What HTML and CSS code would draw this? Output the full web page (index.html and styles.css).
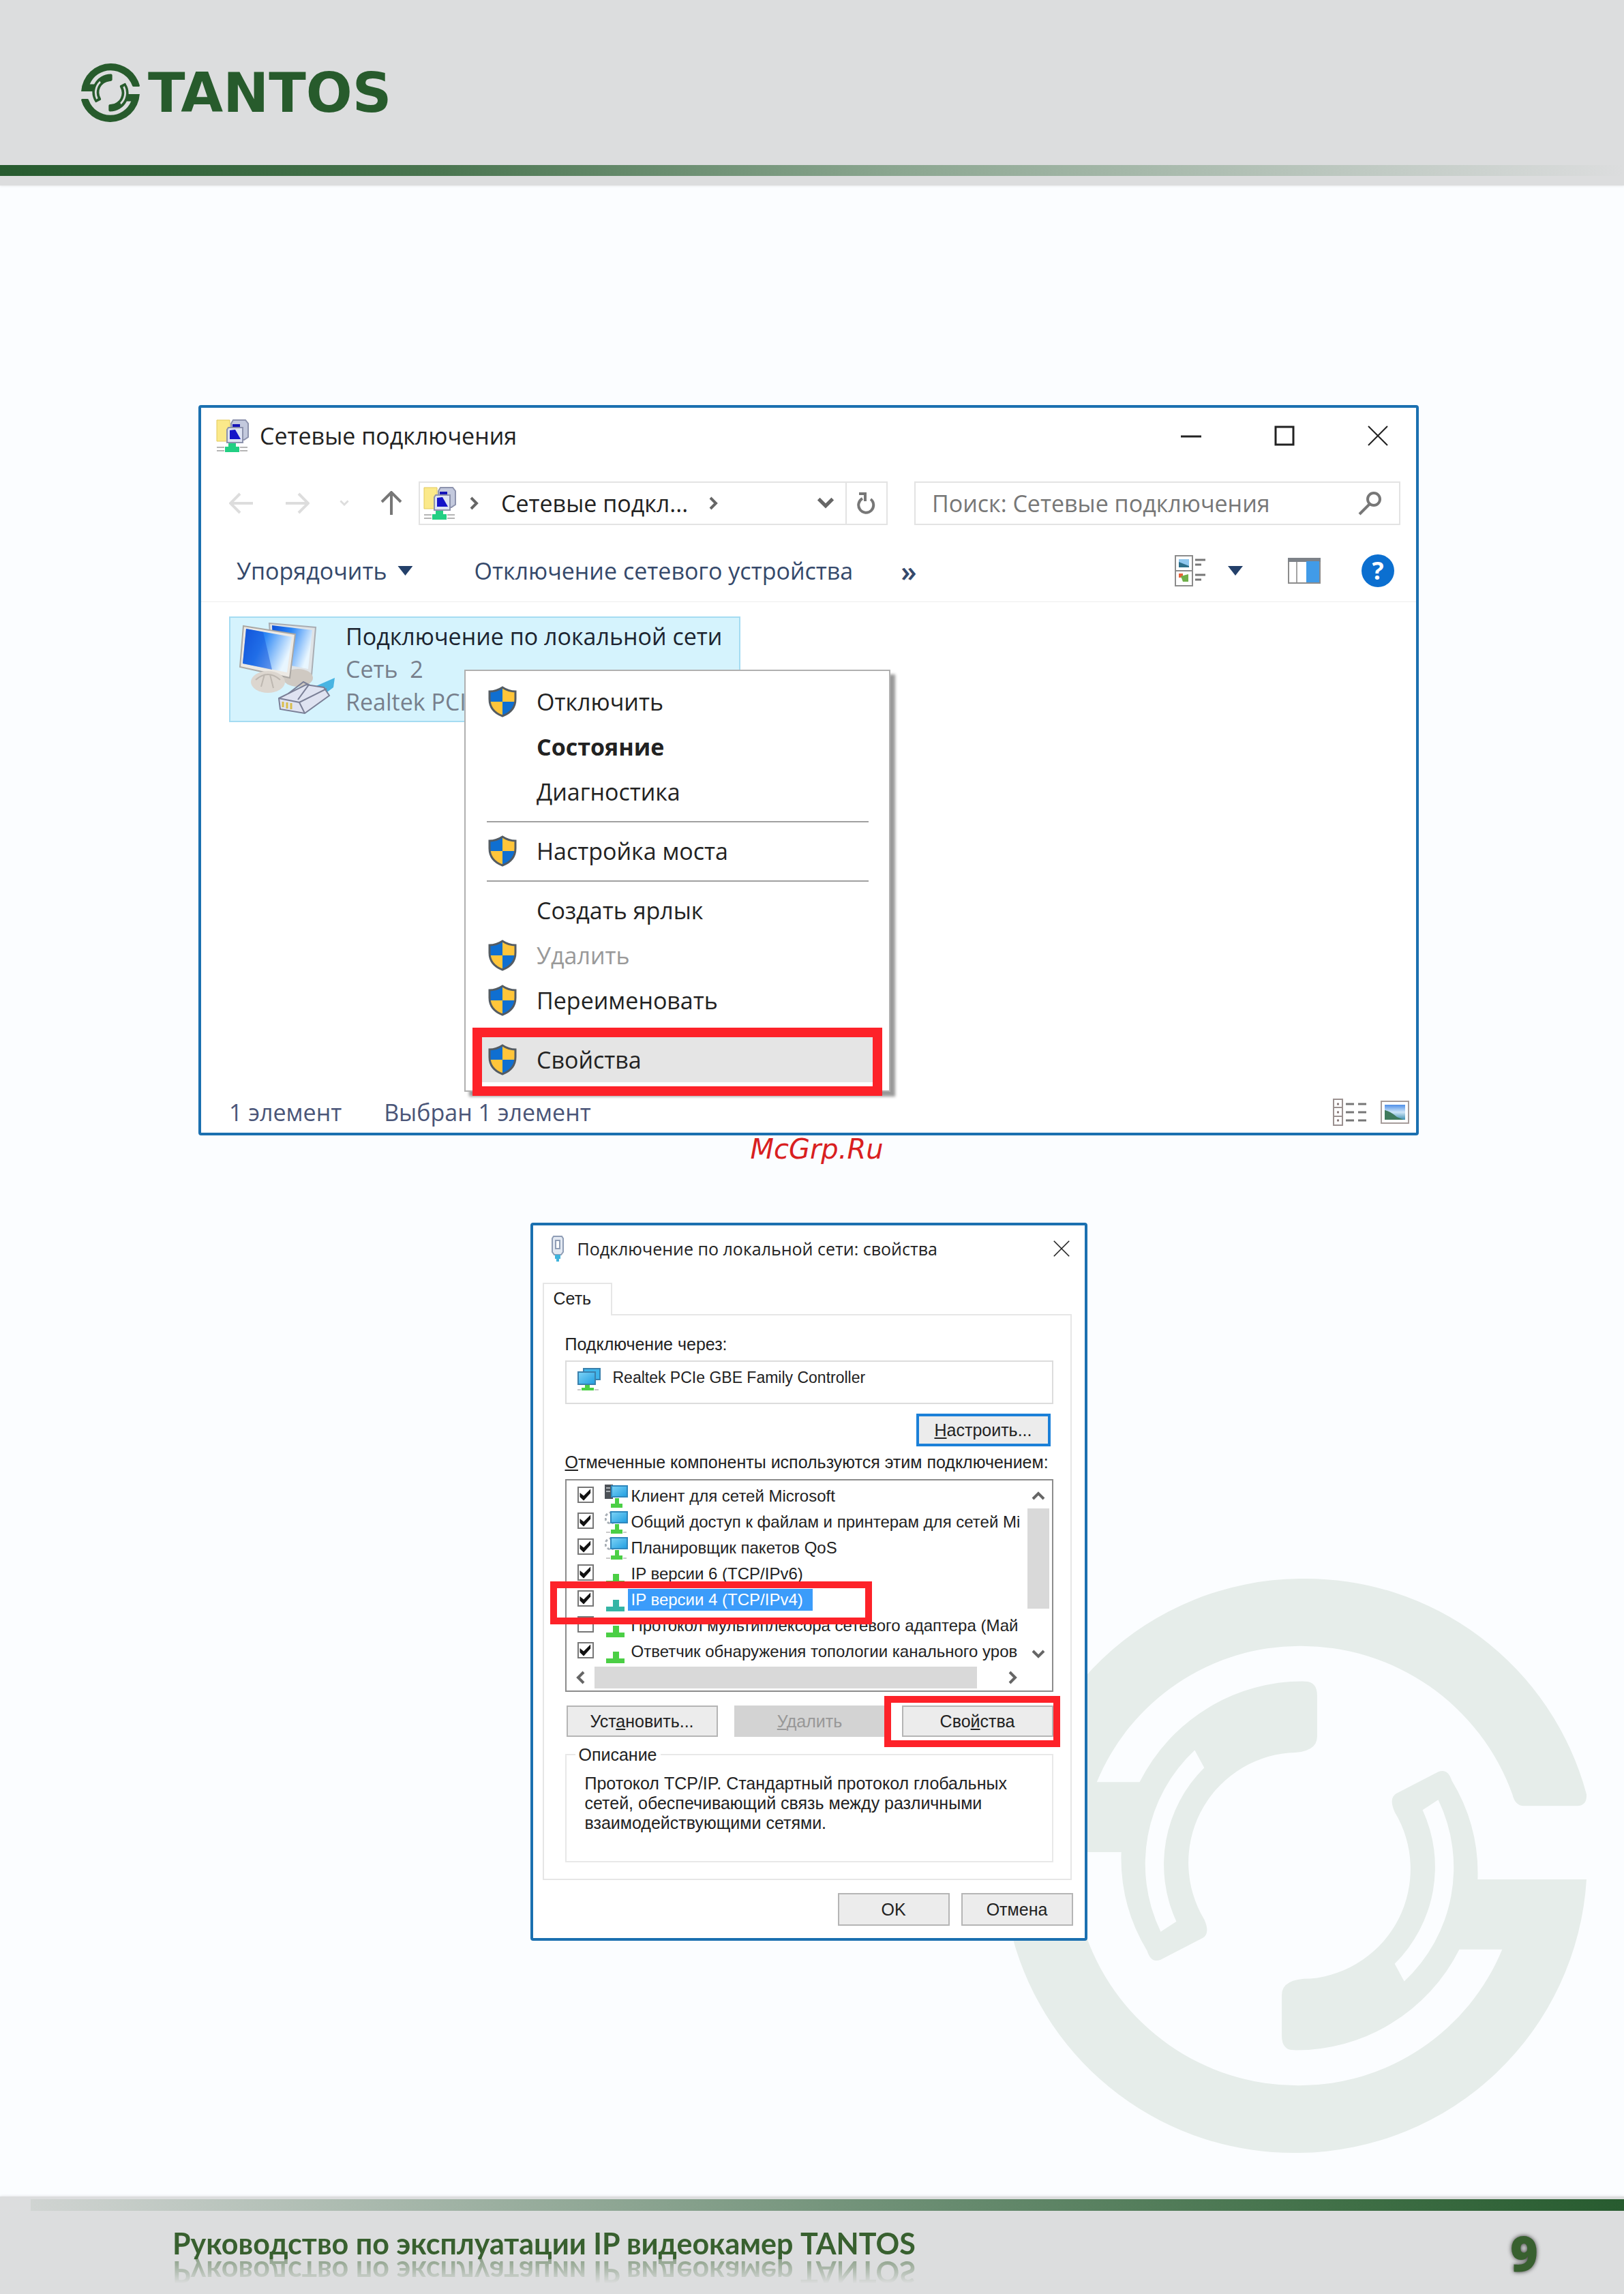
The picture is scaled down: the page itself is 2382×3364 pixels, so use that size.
FILE: index.html
```
<!DOCTYPE html>
<html lang="ru">
<head>
    <meta charset="utf-8">
    <title>Руководство по эксплуатации IP видеокамер TANTOS</title>
    <link rel="stylesheet" href="styles.css">
</head>
<body>
    <svg class="sprite" aria-hidden="true">
        <defs>
            <linearGradient id="screen" x1="0" y1="0" x2="1" y2="0.4">
                <stop offset="0" stop-color="#0b4fd8"/>
                <stop offset="0.45" stop-color="#2b86f5"/>
                <stop offset="1" stop-color="#e8f6ff"/>
            </linearGradient>
            <linearGradient id="cyan" x1="0" y1="0" x2="1" y2="1">
                <stop offset="0" stop-color="#7fd4f7"/>
                <stop offset="1" stop-color="#1f9de0"/>
            </linearGradient>
            <linearGradient id="photo" x1="0" y1="0" x2="0" y2="1">
                <stop offset="0" stop-color="#4f8fe8"/>
                <stop offset="0.5" stop-color="#cfe6f7"/>
                <stop offset="1" stop-color="#3f8fb0"/>
            </linearGradient>
        </defs>
        <symbol id="emblem" viewBox="-423 -423 846 846">
            <g id="emblem-half">
                <path fill-rule="evenodd" d="M408 -88Q423 -88 422 -105A428 428 0 0 0 0 -422A428 428 0 0 0 -422 -20L-262 -20A263 263 0 0 0 -224 125Q-218 144 -204 138L-142 106Q-131 99 -140 79A162 162 0 0 1 -16 -166Q26 -166 26 -190L26 -250Q26 -271 8 -271A268 268 0 0 0 -235 -123L-298 -123A323 323 0 0 1 0 -323A330 330 0 0 1 313 -105Q317 -88 330 -88ZM-154 -170L-140 -144A200 200 0 0 0 -181 82L-204 97A229 229 0 0 1 -154 -170Z"/>
            </g>
            <use href="#emblem-half" transform="rotate(180)"/>
        </symbol>
        <symbol id="shield" viewBox="0 0 44 46">
            <path fill="#0f6fd1" d="M22 2Q13 8 3 8V23H22Z"/>
            <path fill="#ffc53a" d="M22 2Q31 8 41 8V23H22Z"/>
            <path fill="#ffc53a" d="M3 23Q6 38 22 44V23Z"/>
            <path fill="#0f6fd1" d="M41 23Q38 38 22 44V23Z"/>
            <path fill="none" stroke="#545c63" stroke-width="3" d="M22 2Q13 8 3 8V19Q3 37 22 44Q41 37 41 19V8Q31 8 22 2Z"/>
        </symbol>
        <symbol id="net-folder" viewBox="0 0 48 48">
            <path fill="#fbe98a" stroke="#e2c95a" d="M1 1H20V32H1Z"/>
            <path fill="#c3c9dd" stroke="#8d93ad" stroke-width="2" d="M25 1H43L47 6V26L41 30H22V6Z"/>
            <path fill="#1514b8" d="M24 7H35V16H24Z"/>
            <path fill="#dfe4f3" stroke="#8d93ad" stroke-width="2" d="M18 12H39V34H16V15Z"/>
            <path fill="#1514c8" d="M20 16L28 15L36 29H20Z"/>
            <path fill="#22cf83" d="M18 35H29V40H34V48H13V40H18Z"/>
            <path stroke="#b5b5b5" stroke-width="2" d="M1 41H12M35 41H46M1 46H12M35 46H46"/>
        </symbol>
        <symbol id="lan" viewBox="0 0 142 136">
            <path fill="#dfe3e6" stroke="#a9adb3" stroke-width="2" d="M44 2L112 8L106 78L48 66Z"/>
            <path fill="url(#screen)" d="M48 5L107 12L101 69L50 59Z"/>
            <ellipse cx="86" cy="82" rx="22" ry="13" fill="#cfc9c2"/>
            <path fill="#ece9e4" stroke="#aaa7a3" stroke-width="2" d="M6 6L82 18L74 82L1 66Z"/>
            <path fill="url(#screen)" d="M10 10L77 22L70 74L5 61Z"/>
            <path fill="#1656da" opacity=".5" d="M10 10L35 15L48 70L5 61Z"/>
            <ellipse cx="42" cy="88" rx="25" ry="16" fill="#dcd6cf"/>
            <path stroke="#bdb7b0" stroke-width="2" fill="none" d="M24 85Q42 69 60 85M32 95L37 77M50 97L45 77"/>
            <path fill="#48b4e2" d="M108 96L140 82L138 96L122 108Z"/>
            <path fill="#dfe3f1" stroke="#7a7f96" stroke-width="2" d="M58 112L98 92L124 96L132 108L96 134L60 128Z"/>
            <path fill="none" stroke="#7a7f96" stroke-width="2" d="M58 112L88 118L96 134M88 118L128 98M72 105L94 88L102 92L86 114"/>
            <path stroke="#d9bd4a" stroke-width="3" d="M64 117V125M70 118V127M76 119V128"/>
        </symbol>
        <symbol id="adapter" viewBox="0 0 34 34">
            <path fill="#3fb4ea" stroke="#3a80ac" stroke-width="2" d="M9 1H33V17H9Z"/>
            <path fill="url(#cyan)" stroke="#3a80ac" stroke-width="2" d="M1 6H26V24H1Z"/>
            <path fill="#4bcf45" d="M11 25H18V29H24V33H6V29H11Z"/>
            <path stroke="#c9c9c9" stroke-width="2" d="M0 32H5M25 32H31"/>
        </symbol>
        <symbol id="client" viewBox="0 0 34 34">
            <path fill="#4c5157" d="M0 0H12V21H0Z"/>
            <path stroke="#aab0b5" stroke-width="2" d="M2 5H8M2 10H8"/>
            <path fill="url(#cyan)" stroke="#2f87bd" stroke-width="2" d="M10 2H33V18H10Z"/>
            <path fill="#4bcf45" d="M15 20H21V28H26V34H9V28H15Z"/>
        </symbol>
        <symbol id="service" viewBox="0 0 34 34">
            <circle cx="9" cy="11" r="8" fill="none" stroke="#a6adb4" stroke-width="3" stroke-dasharray="4 3"/>
            <path fill="url(#cyan)" stroke="#2f87bd" stroke-width="2" d="M9 2H33V18H9Z"/>
            <path fill="#4bcf45" d="M15 20H21V28H26V34H9V28H15Z"/>
            <path stroke="#c9c9c9" stroke-width="2" d="M2 32H8M27 32H32"/>
        </symbol>
        <symbol id="protocol" viewBox="0 0 34 34">
            <path fill="currentColor" d="M12 17H21V27H29V34H2V27H12Z"/>
        </symbol>
        <symbol id="cross" viewBox="0 0 30 30">
            <path fill="none" stroke="#222" stroke-width="2" d="M1 1L29 29M29 1L1 29"/>
        </symbol>
        <symbol id="chevron" viewBox="0 0 14 20">
            <path fill="none" stroke="currentColor" stroke-width="4" d="M2 2L10 10L2 18"/>
        </symbol>
        <symbol id="arrow" viewBox="0 0 36 32">
            <path fill="none" stroke="currentColor" stroke-width="4" d="M16 2L2 16L16 30M2 16H35"/>
        </symbol>
    </svg>

    <header class="page-header">
        <a class="logo" href="#">
            <svg class="logo-emblem"><use href="#emblem"/></svg>
            <span>TANTOS</span>
        </a>
        <div class="header-line"></div>
    </header>

    <main>
        <svg class="watermark" aria-hidden="true"><use href="#emblem"/></svg>

        <section class="window explorer">
            <div class="title-bar">
                <svg class="icon-48"><use href="#net-folder"/></svg>
                <h2>Сетевые подключения</h2>
                <div class="window-controls">
                    <button aria-label="Свернуть"><svg viewBox="0 0 30 30"><path stroke="#222" stroke-width="3" d="M0 16H30"/></svg></button>
                    <button aria-label="Развернуть"><svg viewBox="0 0 30 30"><path fill="none" stroke="#222" stroke-width="3" d="M2 2H28V28H2Z"/></svg></button>
                    <button aria-label="Закрыть"><svg><use href="#cross"/></svg></button>
                </div>
            </div>

            <div class="nav-row">
                <div class="nav-arrows">
                    <button aria-label="Назад"><svg class="arrow faded"><use href="#arrow"/></svg></button>
                    <button aria-label="Вперед"><svg class="arrow faded forward"><use href="#arrow"/></svg></button>
                    <button aria-label="Последние"><svg class="chevron small faded down"><use href="#chevron"/></svg></button>
                    <button aria-label="Вверх"><svg class="arrow up"><use href="#arrow"/></svg></button>
                </div>
                <div class="address">
                    <svg class="icon-48"><use href="#net-folder"/></svg>
                    <svg class="chevron"><use href="#chevron"/></svg>
                    <span class="address-text">Сетевые подкл...</span>
                    <svg class="chevron"><use href="#chevron"/></svg>
                    <button class="address-drop" aria-label="Список"><svg class="chevron big down"><use href="#chevron"/></svg></button>
                    <button class="address-refresh" aria-label="Обновить">
                        <svg viewBox="0 0 28 34"><path fill="none" stroke="#777" stroke-width="4" d="M21 11A11 11 0 1 1 9 10M4 3H13V14"/></svg>
                    </button>
                </div>
                <div class="search">
                    <input type="text" aria-label="Поиск" placeholder="Поиск: Сетевые подключения">
                    <svg viewBox="0 0 36 36"><circle cx="23" cy="12" r="9" fill="none" stroke="#777" stroke-width="4"/><path stroke="#777" stroke-width="4" d="M17 19L2 34"/></svg>
                </div>
            </div>

            <div class="toolbar">
                <button class="organize">Упорядочить <i class="triangle"></i></button>
                <button>Отключение сетевого устройства</button>
                <button class="more">»</button>
                <div class="toolbar-right">
                    <button class="views" aria-label="Вид">
                        <svg viewBox="0 0 46 46">
                            <path fill="#fff" stroke="#8c8c8c" stroke-width="2" d="M1 1H26V45H1ZM1 23H26"/>
                            <path fill="#8fc7ee" d="M6 6H21V18H6Z"/><path fill="#2c6f8a" d="M6 18V10L21 16V18Z"/>
                            <path fill="#e8623a" d="M6 27H12V33H6Z"/><path fill="#6fb04a" d="M9 31L20 28V39H12Z"/>
                            <path stroke="#777" stroke-width="3" d="M30 7H45M30 14H39M30 29H45M30 36H39"/>
                        </svg>
                        <i class="triangle"></i>
                    </button>
                    <button class="pane" aria-label="Область просмотра">
                        <svg viewBox="0 0 48 38">
                            <path fill="#fff" stroke="#8c8c8c" stroke-width="2" d="M1 1H47V37H1Z"/>
                            <path fill="#7d8288" d="M0 0H48V6H0Z"/>
                            <path stroke="#a5a5a5" stroke-width="2" d="M13 6V36"/>
                            <path fill="#419be8" d="M27 5H46V36H27Z"/>
                        </svg>
                    </button>
                    <button class="help">?</button>
                </div>
            </div>

            <div class="content">
                <div class="connection">
                    <svg class="connection-icon"><use href="#lan"/></svg>
                    <div>
                        <p class="name">Подключение по локальной сети</p>
                        <p>Сеть&nbsp; 2</p>
                        <p>Realtek PCIe GBE</p>
                    </div>
                </div>

                <ul class="context-menu">
                    <li><button><svg><use href="#shield"/></svg>Отключить</button></li>
                    <li><button class="bold">Состояние</button></li>
                    <li><button>Диагностика</button></li>
                    <li class="separator"></li>
                    <li><button><svg><use href="#shield"/></svg>Настройка моста</button></li>
                    <li class="separator"></li>
                    <li><button>Создать ярлык</button></li>
                    <li><button disabled><svg><use href="#shield"/></svg>Удалить</button></li>
                    <li><button><svg><use href="#shield"/></svg>Переименовать</button></li>
                    <li class="separator"></li>
                    <li class="marked"><button><svg><use href="#shield"/></svg>Свойства</button></li>
                </ul>
            </div>

            <div class="status-bar">
                <span>1 элемент</span>
                <span>Выбран 1 элемент</span>
                <div class="status-views">
                    <svg viewBox="0 0 50 40">
                        <path fill="none" stroke="#9b9190" stroke-width="2" d="M1 1H14V39H1ZM1 13H14M1 26H14"/>
                        <path stroke="#8a7a7a" stroke-width="3" d="M6 8H9M6 20H9M6 32H9"/>
                        <path stroke="#777" stroke-width="3" d="M19 8H31M37 8H49M19 20H31M37 20H49M19 32H31M37 32H49"/>
                    </svg>
                    <svg viewBox="0 0 42 34">
                        <path fill="#fff" stroke="#a69c9a" stroke-width="2" d="M1 1H41V33H1Z"/>
                        <path fill="url(#photo)" d="M6 6H36V28H6Z"/>
                        <path fill="#3f7a5c" d="M6 28V14Q14 15 24 24L34 28Z"/>
                    </svg>
                </div>
            </div>
        </section>

        <p class="site-mark">McGrp.Ru</p>

        <section class="window dialog">
            <div class="title-bar">
                <svg class="plug" viewBox="0 0 18 38"><path fill="#e3e9f2" stroke="#8f9db5" stroke-width="2" d="M3 1H15L17 4V24L14 28H4L1 24V4Z"/><path fill="#fff" stroke="#8f9db5" stroke-width="2" d="M6 7H12V19H6Z"/><path fill="#3fb3dc" d="M5 28H13V34H11V38H7V34H5Z"/></svg>
                <h2>Подключение по локальной сети: свойства</h2>
                <button class="close" aria-label="Закрыть"><svg><use href="#cross"/></svg></button>
            </div>

            <button class="tab">Сеть</button>
            <div class="panel">
                <p>Подключение через:</p>
                <div class="adapter">
                    <svg><use href="#adapter"/></svg>
                    <span>Realtek PCIe GBE Family Controller</span>
                </div>
                <button class="btn configure"><u>Н</u>астроить...</button>
                <p class="list-label"><u>О</u>тмеченные компоненты используются этим подключением:</p>

                <div class="list">
                    <ul class="rows">
                        <li><input type="checkbox" id="c1" checked><svg><use href="#client"/></svg><label for="c1">Клиент для сетей Microsoft</label></li>
                        <li><input type="checkbox" id="c2" checked><svg><use href="#service"/></svg><label for="c2">Общий доступ к файлам и принтерам для сетей Mi</label></li>
                        <li><input type="checkbox" id="c3" checked><svg><use href="#service"/></svg><label for="c3">Планировщик пакетов QoS</label></li>
                        <li><input type="checkbox" id="c4" checked><svg><use href="#protocol"/></svg><label for="c4">IP версии 6 (TCP/IPv6)</label></li>
                        <li class="selected"><input type="checkbox" id="c5" checked><svg><use href="#protocol"/></svg><label for="c5">IP версии 4 (TCP/IPv4)</label></li>
                        <li><input type="checkbox" id="c6"><svg><use href="#protocol"/></svg><label for="c6">Протокол мультиплексора сетевого адаптера (Май</label></li>
                        <li><input type="checkbox" id="c7" checked><svg><use href="#protocol"/></svg><label for="c7">Ответчик обнаружения топологии канального уров</label></li>
                    </ul>
                    <div class="v-scroll">
                        <svg class="chevron top"><use href="#chevron"/></svg>
                        <div class="thumb"></div>
                        <svg class="chevron down"><use href="#chevron"/></svg>
                    </div>
                    <div class="h-scroll">
                        <svg class="chevron left"><use href="#chevron"/></svg>
                        <div class="thumb"></div>
                        <svg class="chevron"><use href="#chevron"/></svg>
                    </div>
                </div>

                <div class="actions">
                    <button class="btn">Уст<u>а</u>новить...</button>
                    <button class="btn" disabled><u>У</u>далить</button>
                    <div class="marked"><button class="btn">Сво<u>й</u>ства</button></div>
                </div>

                <fieldset>
                    <legend>Описание</legend>
                    <p>Протокол TCP/IP. Стандартный протокол глобальных сетей, обеспечивающий связь между различными взаимодействующими сетями.</p>
                </fieldset>
            </div>
            <div class="dialog-buttons">
                <button class="btn">OK</button>
                <button class="btn">Отмена</button>
            </div>
        </section>
    </main>

    <footer class="page-footer">
        <div class="footer-line"></div>
        <div class="footer-row">
            <span class="footer-title">Руководство по эксплуатации IP видеокамер TANTOS</span>
            <span class="page-number">9</span>
        </div>
    </footer>
</body>
</html>
```
FILE: styles.css
```
*, *::before, *::after {
    box-sizing: border-box;
}

body {
    margin: 0;
    min-height: 100vh;
    display: flex;
    flex-direction: column;
    position: relative;
    background-color: #fbfdff;
    font-family: "Open Sans", "Noto Sans", sans-serif;
    color: #222;
}

h2, p, ul {
    margin: 0;
    padding: 0;
    font-weight: normal;
    list-style: none;
}

svg {
    display: block;
    flex: none;
}

button {
    margin: 0;
    padding: 0;
    border: none;
    background: none;
    font: inherit;
    color: inherit;
}

.sprite {
    position: absolute;
    width: 0;
    height: 0;
}

/* page header */
.page-header {
    background-color: #dcddde;
    padding: 93px 0 14px;
    box-shadow: 0 0 4px #dcddde;
}

.logo {
    display: flex;
    align-items: center;
    gap: 12px;
    margin-left: 119px;
    height: 86px;
    color: #275b2c;
    font-family: "DejaVu Sans", sans-serif;
    font-size: 80px;
    font-weight: bold;
    text-decoration: none;
}

.logo-emblem {
    width: 86px;
    height: 86px;
    fill: #275b2c;
}

.header-line {
    height: 16px;
    margin-top: 63px;
    background: linear-gradient(to right, #275b2f, #4a7550 27%, #8ba690 55%, #dcddde);
}

/* main area */
main {
    flex: 1;
    padding: 322px 301px 0 291px;
}

.watermark {
    position: absolute;
    right: 54px;
    bottom: 206px;
    width: 844px;
    height: 844px;
    fill: #e6edea;
}

.window {
    position: relative;
    border: 4px solid #1b70b0;
    border-radius: 4px;
    background-color: #fff;
}

.title-bar {
    display: flex;
    align-items: center;
}

.icon-48 {
    width: 48px;
    height: 48px;
}

/* explorer window */
.explorer {
    font-size: 34px;
}

.explorer .title-bar {
    height: 82px;
    padding: 0 41px 0 22px;
}

.explorer h2 {
    flex: 1;
    margin-left: 16px;
    font-size: 34px;
}

.window-controls {
    display: flex;
    gap: 107px;
}

.window-controls svg {
    width: 30px;
    height: 30px;
}

.nav-row {
    display: flex;
    margin: 26px 23px 0 41px;
    height: 64px;
}

.nav-arrows {
    width: 278px;
    display: flex;
    align-items: center;
    justify-content: space-between;
    padding-right: 22px;
}

.arrow {
    width: 36px;
    height: 32px;
    color: #777;
}

.faded {
    color: #ddd;
}

.forward {
    transform: rotate(180deg);
}

.up {
    transform: rotate(90deg);
}

.chevron {
    width: 14px;
    height: 20px;
    color: #666;
}

.chevron.big {
    width: 18px;
    height: 26px;
}

.chevron.small {
    width: 10px;
    height: 14px;
}

.chevron.faded {
    color: #ddd;
}

.down {
    transform: rotate(90deg);
}

.left {
    transform: rotate(180deg);
}

.top {
    transform: rotate(-90deg);
}

.address {
    width: 688px;
    display: flex;
    align-items: center;
    gap: 20px;
    padding-left: 5px;
    border: 2px solid #e3e3e3;
}

.address-text {
    width: 285px;
    margin-left: 12px;
}

.address-drop {
    margin-left: auto;
}

.address-refresh {
    height: 100%;
    width: 60px;
    padding-left: 14px;
    border-left: 2px solid #e3e3e3;
}

.address-refresh svg {
    width: 28px;
    height: 34px;
}

.search {
    flex: 1;
    display: flex;
    align-items: center;
    margin-left: 39px;
    padding: 0 24px;
    border: 2px solid #e3e3e3;
}

.search input {
    flex: 1;
    min-width: 0;
    border: none;
    padding: 0;
    background: none;
    font: inherit;
    outline: none;
}

.search input::placeholder {
    color: #777;
}

.search svg {
    width: 36px;
    height: 36px;
}

.toolbar {
    display: flex;
    align-items: center;
    height: 91px;
    margin-top: 22px;
    padding: 0 32px 0 52px;
    border-bottom: 1px solid #eee;
    color: #35496b;
}

.organize {
    display: flex;
    align-items: center;
    gap: 16px;
    margin-right: 90px;
}

.triangle {
    width: 22px;
    height: 14px;
    background-color: #24406a;
    clip-path: polygon(0 0, 100% 0, 50% 100%);
}

.more {
    margin-left: 70px;
    font-size: 42px;
    line-height: 42px;
    font-weight: 600;
}

.toolbar-right {
    display: flex;
    align-items: center;
    margin-left: auto;
}

.views {
    display: flex;
    align-items: center;
    gap: 32px;
}

.views svg {
    width: 46px;
    height: 46px;
}

.pane {
    margin: 0 60px 0 66px;
}

.pane svg {
    width: 48px;
    height: 38px;
}

.help {
    width: 48px;
    height: 48px;
    border-radius: 50%;
    background-color: #0b6fd0;
    color: #fff;
    font-size: 36px;
    line-height: 48px;
    font-weight: bold;
}

.content {
    position: relative;
    min-height: 718px;
    padding: 21px 41px;
}

.connection {
    display: flex;
    gap: 14px;
    width: 750px;
    height: 155px;
    padding: 3px 0 0 13px;
    border: 2px solid #a5dcf2;
    background-color: #d5f3fd;
    color: #777f8c;
    line-height: 48px;
}

.connection-icon {
    width: 142px;
    height: 136px;
    margin-top: 3px;
}

.connection .name {
    color: #1c2430;
}

.context-menu {
    position: absolute;
    left: 386px;
    top: 99px;
    width: 625px;
    padding: 12px 10px;
    border: 2px solid #b0b0b0;
    background-color: #fff;
    box-shadow: 7px 7px 4px #999;
}

.context-menu li {
    position: relative;
}

.context-menu button {
    display: flex;
    align-items: center;
    gap: 28px;
    width: 100%;
    height: 66px;
    padding-left: 94px;
    text-align: left;
}

.context-menu button:disabled {
    color: #999;
}

.context-menu svg {
    width: 44px;
    height: 46px;
    margin-left: -72px;
}

.context-menu .bold {
    font-weight: bold;
}

.context-menu .separator {
    height: 21px;
    padding: 10px 20px 0 21px;
}

.separator::before {
    content: "";
    display: block;
    border-top: 2px solid #a0a0a0;
}

.context-menu .marked button {
    background-color: #e5e5e5;
}

.marked {
    position: relative;
}

.marked::after {
    content: "";
    position: absolute;
    border: 14px solid #fd2229;
    pointer-events: none;
}

.context-menu .marked::after {
    inset: -14px 0 -20px;
}

.status-bar {
    display: flex;
    align-items: center;
    gap: 62px;
    height: 60px;
    padding: 0 10px 0 41px;
    color: #4a5578;
}

.status-views {
    display: flex;
    align-items: center;
    gap: 20px;
    margin-left: auto;
}

.status-views svg {
    width: 50px;
    height: 40px;
}

.status-views svg + svg {
    width: 42px;
    height: 34px;
}

.site-mark {
    padding-left: 24px;
    color: #d9201f;
    font-family: "DejaVu Sans", sans-serif;
    font-size: 40px;
    font-style: italic;
    line-height: 40px;
    text-align: center;
}

/* properties dialog */
.dialog {
    width: 817px;
    margin: 88px auto 0;
    padding: 0 17px 18px 14px;
    font-family: "Liberation Sans", Arial, sans-serif;
    font-size: 25px;
    line-height: 28px;
}

.dialog .title-bar {
    height: 68px;
    padding: 0 5px 0 13px;
}

.dialog h2 {
    flex: 1;
    margin-left: 20px;
    font-family: "Open Sans", "Noto Sans", sans-serif;
    font-size: 25px;
}

.plug {
    width: 18px;
    height: 38px;
}

.close svg {
    width: 24px;
    height: 24px;
}

.tab {
    display: block;
    position: relative;
    width: 102px;
    height: 48px;
    margin: 16px 0 -2px;
    padding: 0 0 4px 14px;
    border: 2px solid #e6e6e6;
    border-bottom: none;
    background-color: #fff;
    text-align: left;
}

.panel {
    margin-right: 2px;
    padding: 28px 25px 24px 31px;
    border: 2px solid #e6e6e6;
}

.adapter {
    display: flex;
    gap: 18px;
    height: 64px;
    margin-top: 10px;
    padding: 9px 16px;
    border: 2px solid #dcdcdc;
    font-size: 23px;
}

.adapter svg {
    width: 34px;
    height: 34px;
}

.btn {
    height: 48px;
    border: 2px solid #b5b5b5;
    background-color: #ececec;
    text-align: center;
}

.configure {
    display: block;
    width: 197px;
    margin: 14px 4px 9px auto;
    border: 4px solid #1b80d8;
}

.list {
    display: grid;
    grid-template-columns: 1fr 40px;
    height: 312px;
    margin-top: 11px;
    padding-top: 4px;
    border: 2px solid #8c8c8c;
    font-size: 24px;
}

.rows {
    min-width: 0;
}

.rows li {
    position: relative;
    display: flex;
    align-items: center;
    height: 38px;
    padding-left: 16px;
}

.rows input {
    appearance: none;
    flex: none;
    width: 24px;
    height: 24px;
    margin: 0 16px 4px 0;
    border: 2px solid #777;
    background-color: #fff;
}

.rows input:checked::before {
    content: "";
    display: block;
    width: 20px;
    height: 20px;
    background-color: #111;
    clip-path: polygon(10% 35%, 38% 58%, 88% 8%, 88% 38%, 38% 92%, 10% 66%);
}

.rows svg {
    width: 34px;
    height: 34px;
    color: #4bcf45;
}

.rows label {
    padding: 2px 0 2px 5px;
    white-space: nowrap;
}

.rows .selected label {
    padding-right: 14px;
    background-color: #3b9cfa;
    color: #fff;
}

.rows .selected svg {
    color: #35b5a5;
}

.selected::after {
    content: "";
    position: absolute;
    left: -24px;
    top: -8px;
    z-index: 1;
    width: 472px;
    height: 63px;
    border: 10px solid #fd2229;
    pointer-events: none;
}

.v-scroll {
    display: flex;
    flex-direction: column;
    align-items: center;
    padding: 8px 0;
}

.v-scroll .thumb {
    width: 32px;
    height: 147px;
    margin: 9px 0 auto;
    background-color: #d9d9d9;
}

.h-scroll {
    grid-column: 1 / 3;
    display: flex;
    align-items: center;
    justify-content: space-between;
    height: 32px;
    padding: 0 50px 0 13px;
}

.h-scroll .thumb {
    width: 561px;
    height: 32px;
    margin-right: 32px;
    background-color: #d9d9d9;
}

.actions {
    display: flex;
    justify-content: space-between;
    margin-top: 20px;
    padding-left: 2px;
}

.actions .btn {
    display: block;
    width: 222px;
    height: 46px;
}

.actions .btn:disabled {
    border: none;
    background-color: #d3d3d3;
    color: #989898;
}

.actions .marked::after {
    inset: -14px -10px -15px -26px;
    border-width: 10px;
}

fieldset {
    height: 172px;
    margin: 12px 0 0;
    padding: 14px 27px 0;
    border: 2px solid #e8e8e8;
    line-height: 29px;
}

legend {
    margin-left: -14px;
    padding: 0 5px;
    line-height: 28px;
}

.dialog-buttons {
    display: flex;
    justify-content: flex-end;
    gap: 17px;
    margin-top: 19px;
}

.dialog-buttons .btn {
    width: 164px;
}

/* page footer */
.page-footer {
    position: relative;
    height: 143px;
    padding-top: 4px;
    background-color: #dcddde;
    box-shadow: 0 0 4px #dcddde;
}

.footer-line {
    height: 17px;
    margin-left: 45px;
    background: linear-gradient(to right, #d0d4d2, #678b6f 58%, #3f6f46 83%, #275b2f);
}

.footer-row {
    display: flex;
    align-items: flex-start;
    justify-content: space-between;
    padding: 20px 126px 0 253px;
    color: #38602f;
}

.footer-title {
    font-family: Lato, "Open Sans", sans-serif;
    font-size: 43px;
    line-height: 56px;
    font-weight: bold;
    -webkit-box-reflect: below -14px linear-gradient(transparent 20%, rgba(0, 0, 0, .6));
}

.page-number {
    margin-top: 4px;
    font-size: 70px;
    line-height: 76px;
    font-weight: 800;
    text-shadow: 0 0 6px #333;
}
```
